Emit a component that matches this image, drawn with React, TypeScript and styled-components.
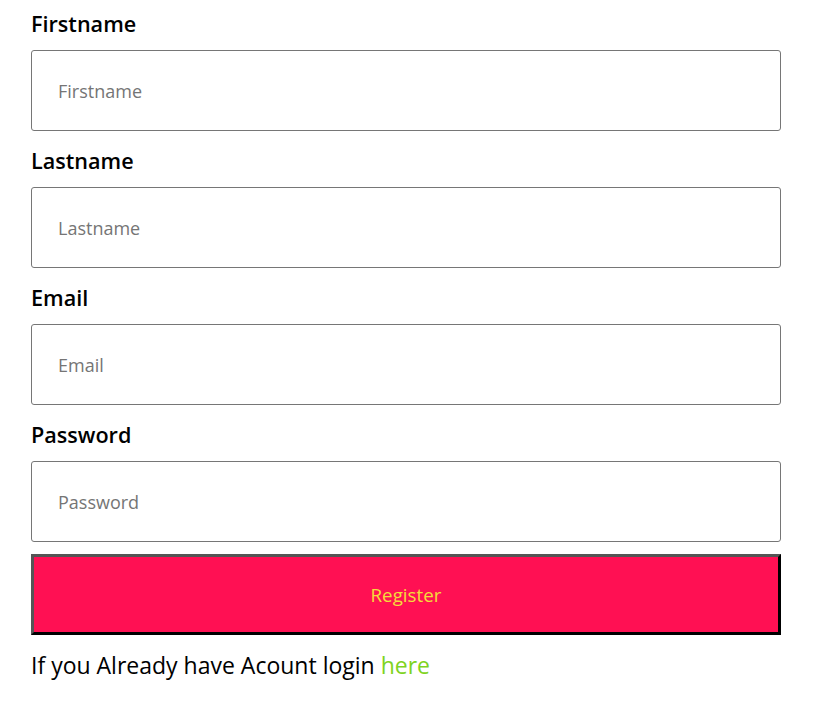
import styled, { createGlobalStyle } from 'styled-components';

const GlobalStyle = createGlobalStyle`
  body {
    margin: 0;
    background: #ffffff;
    font-family: 'Open Sans', 'Noto Sans', sans-serif;
  }
`;

const fields = ['Firstname', 'Lastname', 'Email', 'Password'];

export default function App() {
  return (
    <>
      <GlobalStyle />
      <Form onSubmit={(e) => e.preventDefault()}>
        {fields.map((name) => (
          <Field key={name}>
            <Label htmlFor={name}>{name}</Label>
            <Input
              id={name}
              type={name === 'Password' ? 'password' : 'text'}
              placeholder={name}
            />
          </Field>
        ))}
        <Button type="submit">Register</Button>
        <Footer>
          If you Already have Acount login <Link href="#">here</Link>
        </Footer>
      </Form>
    </>
  );
}

const Form = styled.form`
  display: flex;
  flex-direction: column;
  width: 750px;
  padding: 9px 0 0 31px;
`;

const Field = styled.div`
  display: flex;
  flex-direction: column;
  margin-bottom: 15px;

  &:nth-of-type(4) {
    margin-bottom: 12px;
  }
`;

const Label = styled.label`
  font-size: 21.6px;
  font-weight: 600;
  line-height: 30px;
  color: #000;
  margin-bottom: 11px;
`;

const Input = styled.input`
  box-sizing: border-box;
  height: 81px;
  width: 100%;
  padding: 0 26px;
  border: 1px solid #767676;
  border-radius: 3px;
  font-family: inherit;
  font-size: 18px;
  color: #222;
  outline: none;

  &::placeholder {
    color: #757575;
  }
`;

const Button = styled.button`
  box-sizing: border-box;
  height: 81px;
  width: 100%;
  background: #ff1053;
  color: #f5dc3a;
  font-family: inherit;
  font-size: 18.8px;
  border-style: solid;
  border-width: 3px;
  border-color: #555 #000 #000 #555;
  cursor: pointer;
`;

const Footer = styled.p`
  margin: 15px 0 0;
  font-size: 23px;
  line-height: 30px;
  color: #000;
`;

const Link = styled.a`
  color: #7ed321;
  text-decoration: none;
`;
